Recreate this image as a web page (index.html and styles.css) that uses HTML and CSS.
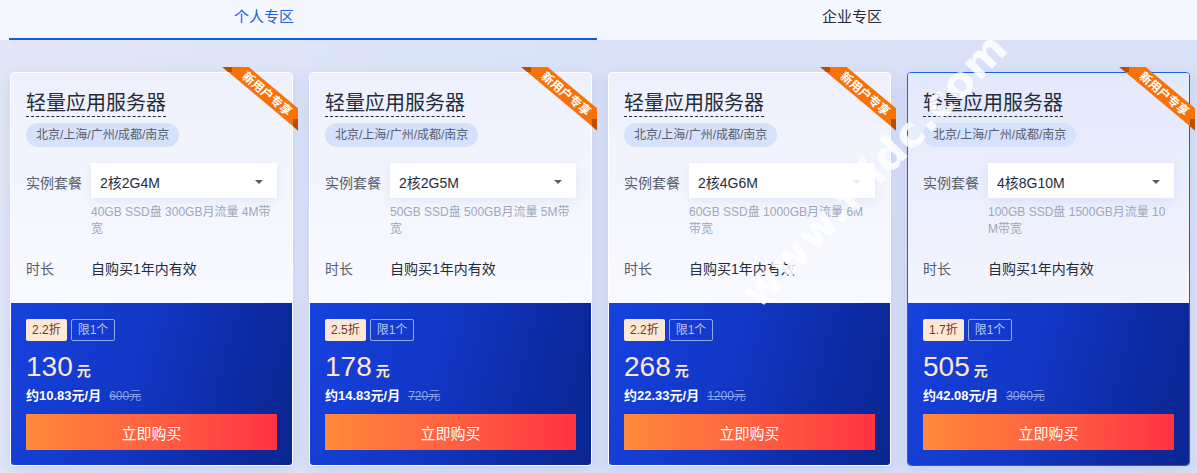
FILE: index.html
```html
<!DOCTYPE html>
<html lang="zh-CN">
<head>
<meta charset="utf-8">
<title>轻量应用服务器</title>
<link rel="stylesheet" href="styles.css">
</head>
<body>
<div class="tabs">
  <div class="tab active"><span>个人专区</span></div>
  <div class="tab"><span>企业专区</span></div>
</div>
<div class="cards">
  <div class="card">
    <div class="ribbon"><div class="band"></div><div class="fold fold-top"></div><div class="fold fold-right"></div><span class="ribbon-text">新用户专享</span></div>
    <div class="card-top">
      <div class="title">轻量应用服务器</div>
      <div class="region">北京/上海/广州/成都/南京</div>
      <div class="row spec"><span class="label">实例套餐</span><div class="select"><span>2核2G4M</span><i class="caret"></i></div></div>
      <div class="desc">40GB SSD盘 300GB月流量 4M带宽</div>
      <div class="row dur"><span class="label">时长</span><span class="value">自购买1年内有效</span></div>
    </div>
    <div class="card-bottom">
      <div class="tags"><span class="tag-discount">2.2折</span><span class="tag-limit">限1个</span></div>
      <div class="price"><span class="num">130</span><span class="unit">元</span></div>
      <div class="monthly"><span class="per">约10.83元/月</span><s class="orig">600元</s></div>
      <button class="buy">立即购买</button>
    </div>
  </div>
  <div class="card">
    <div class="ribbon"><div class="band"></div><div class="fold fold-top"></div><div class="fold fold-right"></div><span class="ribbon-text">新用户专享</span></div>
    <div class="card-top">
      <div class="title">轻量应用服务器</div>
      <div class="region">北京/上海/广州/成都/南京</div>
      <div class="row spec"><span class="label">实例套餐</span><div class="select"><span>2核2G5M</span><i class="caret"></i></div></div>
      <div class="desc">50GB SSD盘 500GB月流量 5M带宽</div>
      <div class="row dur"><span class="label">时长</span><span class="value">自购买1年内有效</span></div>
    </div>
    <div class="card-bottom">
      <div class="tags"><span class="tag-discount">2.5折</span><span class="tag-limit">限1个</span></div>
      <div class="price"><span class="num">178</span><span class="unit">元</span></div>
      <div class="monthly"><span class="per">约14.83元/月</span><s class="orig">720元</s></div>
      <button class="buy">立即购买</button>
    </div>
  </div>
  <div class="card">
    <div class="ribbon"><div class="band"></div><div class="fold fold-top"></div><div class="fold fold-right"></div><span class="ribbon-text">新用户专享</span></div>
    <div class="card-top">
      <div class="title">轻量应用服务器</div>
      <div class="region">北京/上海/广州/成都/南京</div>
      <div class="row spec"><span class="label">实例套餐</span><div class="select"><span>2核4G6M</span><i class="caret"></i></div></div>
      <div class="desc">60GB SSD盘 1000GB月流量 6M带宽</div>
      <div class="row dur"><span class="label">时长</span><span class="value">自购买1年内有效</span></div>
    </div>
    <div class="card-bottom">
      <div class="tags"><span class="tag-discount">2.2折</span><span class="tag-limit">限1个</span></div>
      <div class="price"><span class="num">268</span><span class="unit">元</span></div>
      <div class="monthly"><span class="per">约22.33元/月</span><s class="orig">1200元</s></div>
      <button class="buy">立即购买</button>
    </div>
  </div>
  <div class="card selected">
    <div class="ribbon"><div class="band"></div><div class="fold fold-top"></div><div class="fold fold-right"></div><span class="ribbon-text">新用户专享</span></div>
    <div class="card-top">
      <div class="title">轻量应用服务器</div>
      <div class="region">北京/上海/广州/成都/南京</div>
      <div class="row spec"><span class="label">实例套餐</span><div class="select"><span>4核8G10M</span><i class="caret"></i></div></div>
      <div class="desc">100GB SSD盘 1500GB月流量 10M带宽</div>
      <div class="row dur"><span class="label">时长</span><span class="value">自购买1年内有效</span></div>
    </div>
    <div class="card-bottom">
      <div class="tags"><span class="tag-discount">1.7折</span><span class="tag-limit">限1个</span></div>
      <div class="price"><span class="num">505</span><span class="unit">元</span></div>
      <div class="monthly"><span class="per">约42.08元/月</span><s class="orig">3060元</s></div>
      <button class="buy">立即购买</button>
    </div>
  </div>
</div>
<div class="watermark">www.ffidc.com</div>
</body>
</html>
```

FILE: styles.css
```css
* { box-sizing: border-box; }
html, body {
  margin: 0;
  padding: 0;
}
body {
  width: 1197px;
  height: 473px;
  overflow: hidden;
  position: relative;
  font-family: "Liberation Sans", "Noto Sans CJK SC", sans-serif;
  color: #252b3a;
  background: linear-gradient(100deg, #e3e7f8 0%, #dbe2f7 45%, #dae1f7 100%);
}

/* tabs */
.tabs {
  height: 40px;
  background: #f4f7fe;
  display: grid;
  grid-template-columns: 588px 588px;
  padding-left: 9px;
}
.tab {
  display: flex;
  align-items: center;
  justify-content: center;
  padding-right: 78px;
  padding-bottom: 10px;
  font-size: 15px;
  color: #252b3a;
}
.tab.active {
  color: #1c5fdf;
  border-bottom: 2px solid #0d5be0;
  padding-bottom: 8px;
}

/* cards */
.cards {
  display: flex;
  gap: 16px;
  padding: 32px 0 0 10px;
}
.card {
  position: relative;
  width: 283px;
  border: 1px solid #ffffff;
  border-radius: 4px;
  box-shadow: 0 4px 16px rgba(70, 95, 190, 0.16);
  display: flex;
  flex-direction: column;
}
.card-top {
  height: 230px;
  padding: 17px 0 0 15px;
  border-radius: 3px 3px 0 0;
  background: linear-gradient(to bottom, #eef1fd 0%, #f9faff 100%);
}
.card.selected {
  border-color: #1d5fe4;
}
.card.selected .card-top {
  background: linear-gradient(to bottom, #e3e9fc 0%, #f3f5fe 100%);
}
.title {
  display: inline-block;
  font-size: 20px;
  line-height: 26px;
  color: #252b3a;
  border-bottom: 1px dashed #252b3a;
}
.region {
  display: table;
  margin-top: 6px;
  height: 24px;
  line-height: 24px;
  padding: 0 10px;
  border-radius: 12px;
  background: #d6e2fb;
  font-size: 12px;
  color: #575d6c;
}
.row {
  display: flex;
  align-items: center;
}
.label {
  width: 65px;
  flex: none;
  font-size: 14px;
  color: #575d6c;
}
.spec {
  margin-top: 16px;
}
.spec .label {
  padding-top: 3px;
}
.select {
  width: 186px;
  height: 35px;
  background: #ffffff;
  box-shadow: 0 3px 12px rgba(80, 100, 180, 0.10);
  display: flex;
  align-items: center;
  justify-content: space-between;
  padding: 3px 14px 0 9px;
  font-size: 14px;
  color: #252b3a;
}
.caret {
  width: 0;
  height: 0;
  border-left: 4px solid transparent;
  border-right: 4px solid transparent;
  border-top: 4px solid #575d6c;
}
.desc {
  margin: 6px 0 0 65px;
  width: 183px;
  font-size: 12px;
  line-height: 17px;
  color: #9ea6ba;
  word-break: break-all;
}
.dur {
  margin-top: 21px;
  line-height: 20px;
}
.value {
  font-size: 14px;
  color: #252b3a;
}

/* blue price part */
.card-bottom {
  flex: 1;
  padding: 16px 15px 15px 15px;
  border-radius: 0 0 3px 3px;
  background: linear-gradient(105deg, #1642dd 0%, #1236c4 45%, #0c2aa0 80%, #0a2690 100%);
}
.tags {
  display: flex;
  gap: 4px;
}
.tag-discount, .tag-limit {
  height: 22px;
  line-height: 20px;
  font-size: 12px;
  padding: 0 5px;
  border-radius: 2px;
  border: 1px solid transparent;
}
.tag-discount {
  background: #fde8d6;
  color: #6b3628;
}
.tag-limit {
  border-color: rgba(190, 205, 250, 0.75);
  color: #b9c6f6;
  padding: 0 6px;
}
.price {
  margin-top: 12px;
  height: 28px;
  line-height: 28px;
  color: #fde6d3;
  display: flex;
  align-items: baseline;
}
.num {
  font-size: 28px;
}
.unit {
  font-size: 14px;
  font-weight: bold;
  margin-left: 4px;
}
.monthly {
  margin-top: 6px;
  height: 18px;
  line-height: 18px;
  display: flex;
  align-items: baseline;
}
.per {
  font-size: 13px;
  font-weight: bold;
  color: #ffffff;
}
.orig {
  margin-left: 8px;
  font-size: 12px;
  color: #8da2ee;
}
.buy {
  display: block;
  margin-top: 9px;
  width: 251px;
  height: 36px;
  border: none;
  border-radius: 0;
  padding: 0;
  font-family: inherit;
  font-size: 15px;
  color: #ffffff;
  background: linear-gradient(to right, #ff8a3a 0%, #ff5d42 55%, #ff3242 100%);
}

/* ribbon */
.ribbon {
  position: absolute;
  top: -6px;
  right: -6px;
  width: 80px;
  height: 80px;
  overflow: hidden;
  pointer-events: none;
}
.band, .fold {
  position: absolute;
  inset: 0;
}
.band {
  background: #f97209;
  clip-path: polygon(4.3px 0, 30.7px 0, 80px 41.3px, 80px 63.5px);
}
.fold {
  background: #b84f00;
}
.fold-top {
  clip-path: polygon(4.3px 0, 14px 0, 14px 5px, 10.2px 5px);
}
.fold-right {
  clip-path: polygon(75px 52px, 80px 52px, 80px 63.5px, 75px 59.3px);
}
.ribbon-text {
  position: absolute;
  left: 48.5px;
  top: 26.5px;
  transform: translate(-50%, -50%) rotate(40deg);
  font-size: 12px;
  font-weight: bold;
  line-height: 16px;
  color: #ffffff;
  white-space: nowrap;
}

/* watermark overlay */
.watermark {
  position: absolute;
  left: 874px;
  top: 170px;
  transform: translate(-50%, -50%) rotate(-46deg);
  font-family: "DejaVu Sans", sans-serif;
  font-size: 42px;
  font-weight: bold;
  letter-spacing: 1px;
  color: rgba(255, 255, 255, 0.9);
  white-space: nowrap;
  pointer-events: none;
}
```
